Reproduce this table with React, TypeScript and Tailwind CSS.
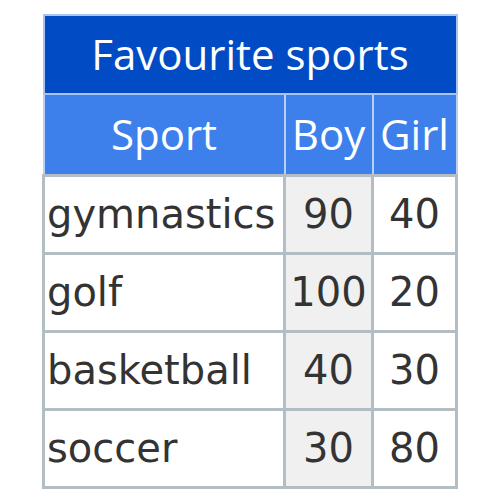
const rows = [
  { sport: 'gymnastics', boy: 90, girl: 40 },
  { sport: 'golf', boy: 100, girl: 20 },
  { sport: 'basketball', boy: 40, girl: 30 },
  { sport: 'soccer', boy: 30, girl: 80 },
]

export default function App() {
  return (
    <div className="w-[500px] h-[500px] bg-white pt-[14px] pl-[42px]">
      <table className="border-collapse table-fixed w-[413px]">
        <colgroup>
          <col className="w-[241px]" />
          <col className="w-[88px]" />
          <col className="w-[84px]" />
        </colgroup>
        <thead className="font-['Open_Sans',sans-serif] text-white text-[42px]">
          <tr className="h-[79px]">
            <th colSpan={3} className="bg-[#014bc5] border-2 border-[#a9c4ee] font-normal text-center p-0 pb-[2px]">
              Favourite sports
            </th>
          </tr>
          <tr className="h-[81px]">
            <th className="bg-[#3d80ec] border-2 border-[#b9d0f4] font-normal text-center p-0 pb-[2px]">Sport</th>
            <th className="bg-[#3d80ec] border-2 border-[#b9d0f4] font-normal text-center p-0 pb-[2px]">Boy</th>
            <th className="bg-[#3d80ec] border-2 border-[#b9d0f4] font-normal text-center p-0 pb-[2px]">Girl</th>
          </tr>
        </thead>
        <tbody className="font-['DejaVu_Sans',sans-serif] text-[40px] text-[#333333]">
          {rows.map((r) => (
            <tr key={r.sport} className="h-[78px]">
              <td className="border-[3px] border-[#b3bec4] p-0 pl-[2px]">{r.sport}</td>
              <td className="border-[3px] border-[#b3bec4] bg-[#eff0ef] text-center p-0">{r.boy}</td>
              <td className="border-[3px] border-[#b3bec4] text-center p-0">{r.girl}</td>
            </tr>
          ))}
        </tbody>
      </table>
    </div>
  )
}
